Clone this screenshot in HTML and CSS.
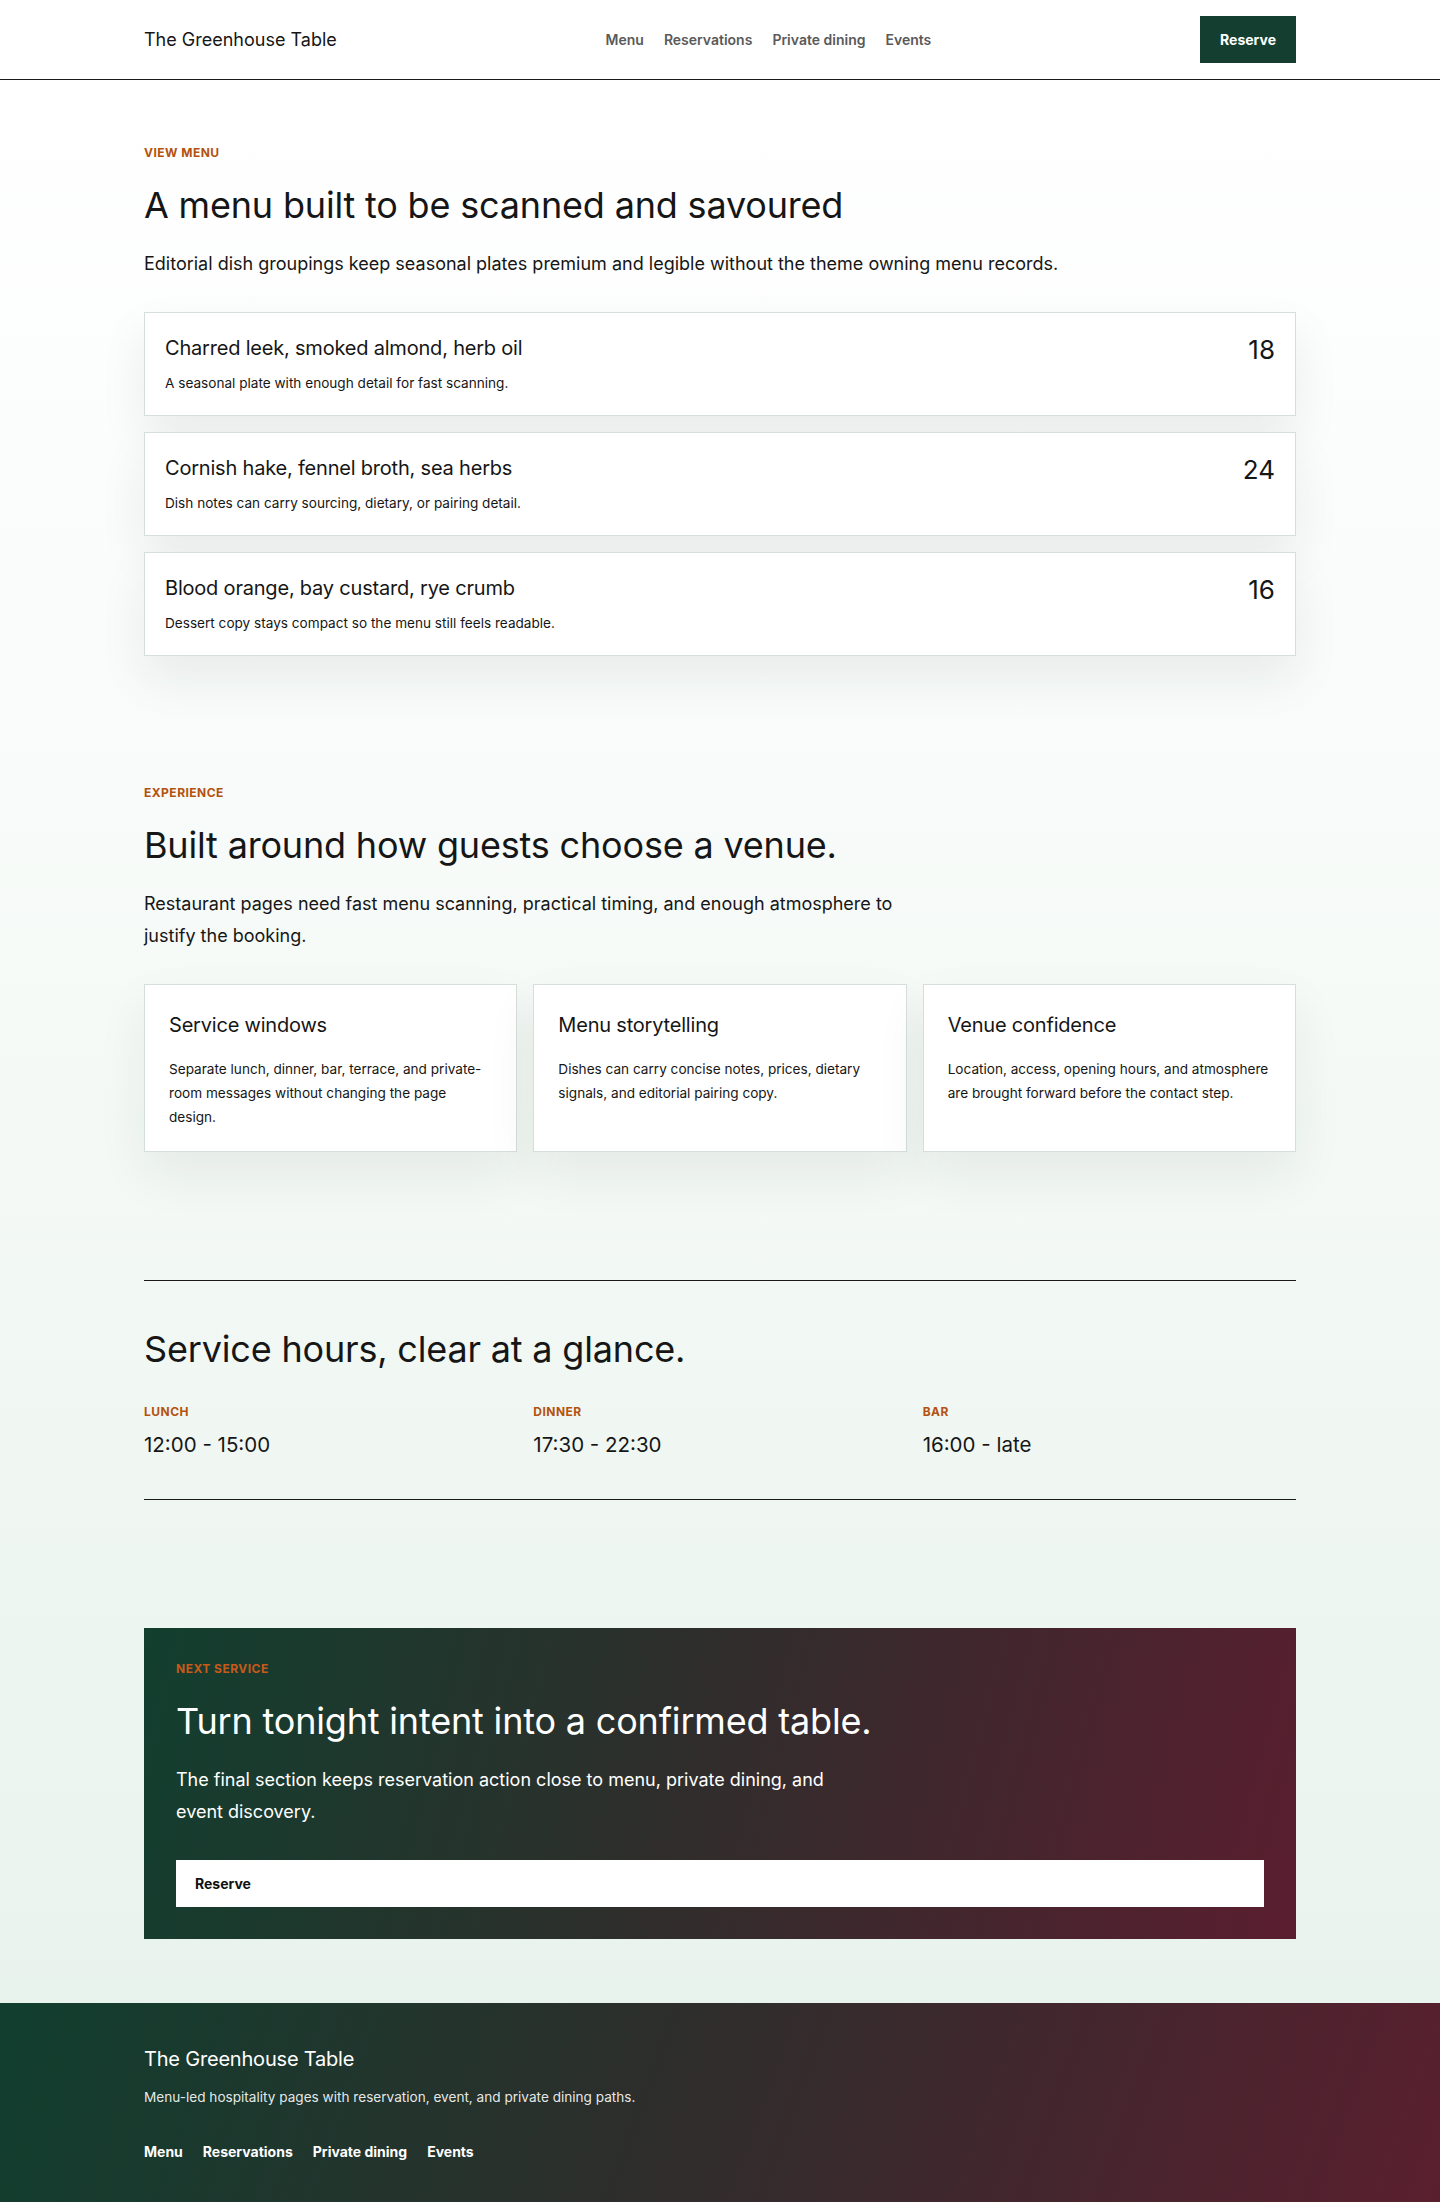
FILE: index.html
```html
<!DOCTYPE html>
<html lang="en">
<head>
<meta charset="utf-8">
<title>The Greenhouse Table</title>
<link rel="stylesheet" href="styles.css">
</head>
<body>
<header class="site-header">
  <div class="container header-inner">
    <a class="logo" href="#">The Greenhouse Table</a>
    <nav class="main-nav">
      <a href="#">Menu</a>
      <a href="#">Reservations</a>
      <a href="#">Private dining</a>
      <a href="#">Events</a>
    </nav>
    <a class="btn-reserve" href="#">Reserve</a>
  </div>
</header>

<main class="page">
  <section class="section">
    <div class="container">
      <p class="eyebrow">View menu</p>
      <h1 class="title">A menu built to be scanned and savoured</h1>
      <p class="lead">Editorial dish groupings keep seasonal plates premium and legible without the theme owning menu records.</p>
      <div class="menu-list">
        <article class="dish">
          <div class="dish-text">
            <h3 class="dish-name">Charred leek, smoked almond, herb oil</h3>
            <p class="dish-desc">A seasonal plate with enough detail for fast scanning.</p>
          </div>
          <span class="dish-price">18</span>
        </article>
        <article class="dish">
          <div class="dish-text">
            <h3 class="dish-name">Cornish hake, fennel broth, sea herbs</h3>
            <p class="dish-desc">Dish notes can carry sourcing, dietary, or pairing detail.</p>
          </div>
          <span class="dish-price">24</span>
        </article>
        <article class="dish">
          <div class="dish-text">
            <h3 class="dish-name">Blood orange, bay custard, rye crumb</h3>
            <p class="dish-desc">Dessert copy stays compact so the menu still feels readable.</p>
          </div>
          <span class="dish-price">16</span>
        </article>
      </div>
    </div>
  </section>

  <section class="section">
    <div class="container">
      <p class="eyebrow">Experience</p>
      <h2 class="title">Built around how guests choose a venue.</h2>
      <p class="lead lead-narrow">Restaurant pages need fast menu scanning, practical timing, and enough atmosphere to justify the booking.</p>
      <div class="feature-grid">
        <article class="feature">
          <h3 class="feature-title">Service windows</h3>
          <p class="feature-desc">Separate lunch, dinner, bar, terrace, and private-room messages without changing the page design.</p>
        </article>
        <article class="feature">
          <h3 class="feature-title">Menu storytelling</h3>
          <p class="feature-desc">Dishes can carry concise notes, prices, dietary signals, and editorial pairing copy.</p>
        </article>
        <article class="feature">
          <h3 class="feature-title">Venue confidence</h3>
          <p class="feature-desc">Location, access, opening hours, and atmosphere are brought forward before the contact step.</p>
        </article>
      </div>
    </div>
  </section>

  <section class="section">
    <div class="container">
      <div class="hours">
        <h2 class="title">Service hours, clear at a glance.</h2>
        <div class="hours-grid">
          <div class="hours-item">
            <p class="eyebrow">Lunch</p>
            <p class="hours-time">12:00 - 15:00</p>
          </div>
          <div class="hours-item">
            <p class="eyebrow">Dinner</p>
            <p class="hours-time">17:30 - 22:30</p>
          </div>
          <div class="hours-item">
            <p class="eyebrow">Bar</p>
            <p class="hours-time">16:00 - late</p>
          </div>
        </div>
      </div>
    </div>
  </section>

  <section class="section">
    <div class="container">
      <div class="cta">
        <p class="eyebrow">Next service</p>
        <h2 class="title cta-title">Turn tonight intent into a confirmed table.</h2>
        <p class="lead cta-lead">The final section keeps reservation action close to menu, private dining, and event discovery.</p>
        <a class="cta-btn" href="#">Reserve</a>
      </div>
    </div>
  </section>
</main>

<footer class="site-footer">
  <div class="container">
    <p class="footer-title">The Greenhouse Table</p>
    <p class="footer-desc">Menu-led hospitality pages with reservation, event, and private dining paths.</p>
    <nav class="footer-nav">
      <a href="#">Menu</a>
      <a href="#">Reservations</a>
      <a href="#">Private dining</a>
      <a href="#">Events</a>
    </nav>
  </div>
</footer>
</body>
</html>
```

FILE: styles.css
```css
* { box-sizing: border-box; }

html, body {
  margin: 0;
  padding: 0;
}

body {
  font-family: Inter, "Noto Sans", "Liberation Sans", sans-serif;
  color: #161616;
  background: #ffffff;
}

a { text-decoration: none; color: inherit; }
p, h1, h2, h3 { margin: 0; }

.container {
  width: 1152px;
  margin: 0 auto;
}

/* Header */
.site-header {
  background: #ffffff;
  border-bottom: 1px solid #1a1a1a;
}
.header-inner {
  height: 79px;
  display: flex;
  align-items: center;
  justify-content: space-between;
}
.logo {
  font-size: 18px;
  font-weight: 400;
  color: #161616;
}
.main-nav {
  display: flex;
  gap: 20px;
}
.main-nav a {
  font-size: 14px;
  font-weight: 600;
  color: #5a5a5a;
}
.btn-reserve {
  background: #143f30;
  color: #ffffff;
  font-size: 14px;
  font-weight: 700;
  line-height: 19px;
  padding: 14px 20px;
}

/* Page */
.page {
  background: linear-gradient(180deg, #ffffff 0%, #f4f9f6 55%, #e9f3ed 100%);
}
.section {
  padding: 64px 0;
}

.eyebrow {
  font-size: 12px;
  line-height: 18px;
  font-weight: 700;
  letter-spacing: 0.04em;
  text-transform: uppercase;
  color: #b4520f;
}
.title {
  margin-top: 19px;
  font-size: 36px;
  line-height: 48px;
  font-weight: 400;
  letter-spacing: -0.005em;
  color: #161616;
}
.lead {
  margin-top: 19px;
  font-size: 18px;
  line-height: 32px;
  color: #161616;
}
.lead-narrow { max-width: 780px; }

/* Menu */
.menu-list {
  margin-top: 32px;
  display: flex;
  flex-direction: column;
  gap: 16px;
}
.dish {
  background: #ffffff;
  border: 1px solid #d5dedb;
  box-shadow: 0 22px 48px rgba(24, 40, 32, 0.08);
  padding: 20px;
  min-height: 104px;
  display: flex;
  justify-content: space-between;
  align-items: flex-start;
}
.dish-name {
  font-size: 20px;
  line-height: 30px;
  font-weight: 400;
  letter-spacing: -0.01em;
}
.dish-desc {
  margin-top: 10px;
  font-size: 13.6px;
  line-height: 21px;
}
.dish-price {
  font-size: 26px;
  line-height: 34px;
  font-weight: 400;
}

/* Features */
.feature-grid {
  margin-top: 32px;
  display: grid;
  grid-template-columns: repeat(3, 1fr);
  gap: 16px;
}
.feature {
  background: #ffffff;
  border: 1px solid #d5dedb;
  box-shadow: 0 22px 48px rgba(24, 40, 32, 0.07);
  padding: 24px 24px 22px;
}
.feature-title {
  font-size: 20px;
  line-height: 32px;
  font-weight: 400;
  letter-spacing: -0.01em;
}
.feature-desc {
  margin-top: 16px;
  font-size: 13.6px;
  line-height: 24px;
}

/* Hours */
.hours {
  border-top: 1px solid #1a1a1a;
  border-bottom: 1px solid #1a1a1a;
  padding: 44px 0 40px;
}
.hours .title { margin-top: 0; }
.hours-grid {
  margin-top: 30px;
  display: grid;
  grid-template-columns: repeat(3, 1fr);
  gap: 16px;
}
.hours-time {
  margin-top: 10px;
  font-size: 20.5px;
  line-height: 28px;
}

/* CTA */
.cta {
  background: linear-gradient(105deg, #123f2f 0%, #2e2e2c 45%, #5a1e2f 100%);
  color: #ffffff;
  padding: 32px;
}
.cta .eyebrow { color: #c9591a; }
.cta-title { color: #ffffff; }
.cta-lead { color: #ffffff; max-width: 670px; }
.cta-btn {
  display: block;
  margin-top: 32px;
  background: #ffffff;
  color: #111111;
  font-size: 14px;
  font-weight: 700;
  line-height: 19px;
  padding: 14px 19px;
}

/* Footer */
.site-footer {
  background: linear-gradient(110deg, #113f2f 0%, #2d2e2c 45%, #5a1f2f 100%);
  color: #ffffff;
  padding: 40px 0 40px;
}
.footer-title {
  font-size: 20px;
  line-height: 32px;
  letter-spacing: -0.01em;
}
.footer-desc {
  margin-top: 12px;
  font-size: 13.6px;
  line-height: 21px;
  color: rgba(255, 255, 255, 0.9);
}
.footer-nav {
  margin-top: 33px;
  display: flex;
  gap: 20px;
}
.footer-nav a {
  font-size: 14px;
  line-height: 21px;
  font-weight: 700;
  color: #ffffff;
}
```
